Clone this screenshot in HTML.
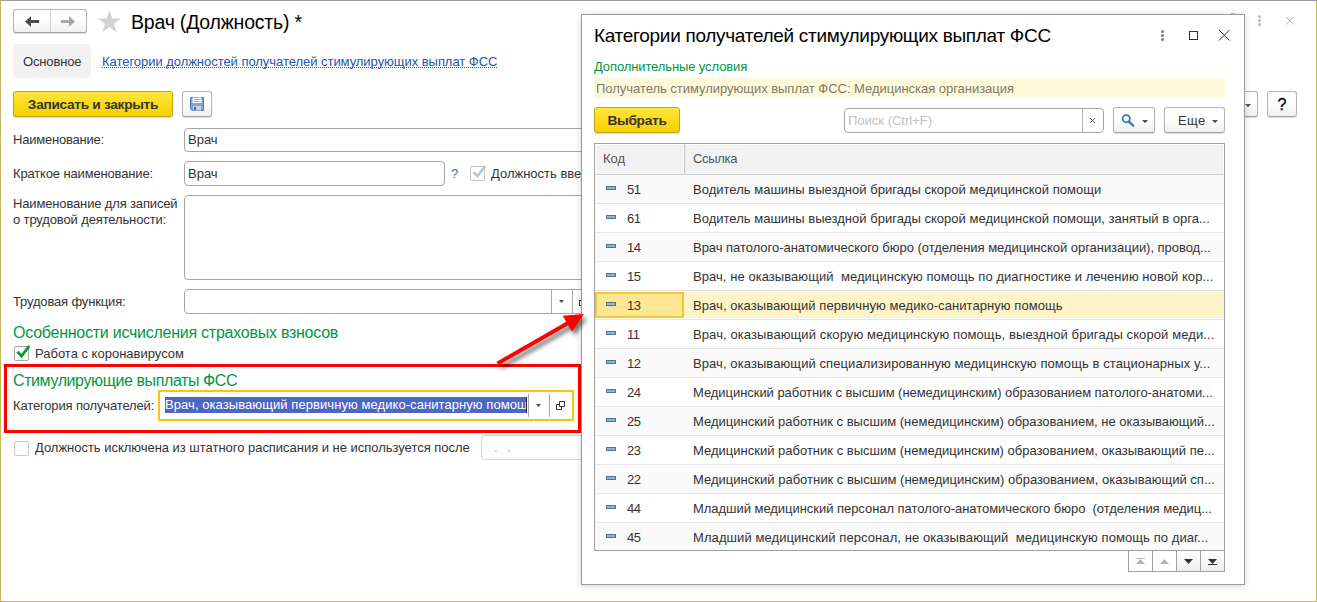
<!DOCTYPE html>
<html lang="ru">
<head>
<meta charset="utf-8">
<title>Врач (Должность)</title>
<style>
*{box-sizing:border-box;margin:0;padding:0}
html,body{width:1317px;height:602px;overflow:hidden;background:#fff}
body{font-family:"Liberation Sans",sans-serif;font-size:13px;color:#333;position:relative}
.abs{position:absolute}
#frame{position:absolute;left:0;top:0;width:1317px;height:602px;border-left:1px solid #c6b65e;border-right:1px solid #c6b65e;border-bottom:1px solid #c6b65e;border-top:1px solid #9c9c9c;pointer-events:none;z-index:50}
.t{position:absolute;white-space:nowrap;line-height:16px;height:16px}
.btn{position:absolute;border:1px solid #b5b5b5;border-bottom-color:#a2a2a2;border-radius:3px;background:linear-gradient(#fff 40%,#efefef);box-shadow:0 1px 1px rgba(0,0,0,.16)}
.ybtn{position:absolute;border:1px solid #c5a30b;border-radius:3px;background:linear-gradient(#ffe63a,#f5d000);box-shadow:0 1px 1px rgba(0,0,0,.16);font-weight:bold;color:#353535;text-align:center;font-size:13.7px;letter-spacing:-0.3px}
.inp{position:absolute;border:1px solid #a6a6a6;border-radius:4px;background:#fff}
.green{color:#009646}
.chk{position:absolute;width:15px;height:15px;border:1px solid #a6a6a6;border-radius:2px;background:#fff}
</style>
</head>
<body>
<!-- ===== main form ===== -->
<div id="main">
  <!-- nav buttons -->
  <div class="btn" style="left:13px;top:9px;width:74px;height:24px"></div>
  <div class="abs" style="left:50px;top:10px;width:1px;height:22px;background:#cfcfcf"></div>
  <svg class="abs" style="left:24px;top:16px" width="16" height="11" viewBox="0 0 16 11"><path d="M1 5.5 L7 0 V4 H15 V7 H7 V11 Z" fill="#4a4a4a"/></svg>
  <svg class="abs" style="left:60px;top:16px" width="16" height="11" viewBox="0 0 16 11"><path d="M15 5.5 L9 0 V4 H1 V7 H9 V11 Z" fill="#a9a9a9"/></svg>
  <!-- star -->
  <svg class="abs" style="left:96px;top:8px" width="28" height="26" viewBox="96 8 28 26"><path d="M109.45 9.95 L112.21 18.45 L121.15 18.45 L113.92 23.70 L116.68 32.20 L109.45 26.95 L102.22 32.20 L104.98 23.70 L97.75 18.45 L106.69 18.45 Z" fill="#d0d3d5"/></svg>
  <div class="t" style="left:131px;top:9.5px;font-size:19.5px;letter-spacing:-0.2px;line-height:24px;height:24px;color:#000">Врач (Должность) *</div>

  <!-- tabs -->
  <div class="abs" style="left:13px;top:44px;width:78px;height:34px;background:#f2f2f2;border-radius:4px"></div>
  <div class="t" style="letter-spacing:-0.16px;left:23px;top:54px">Основное</div>
  <div class="t" style="letter-spacing:-0.04px;left:102px;top:54px;color:#2552b4;border-bottom:1px dotted #2552b4;height:14px">Категории должностей получателей стимулирующих выплат ФСС</div>

  <!-- command bar -->
  <div class="ybtn" style="left:13px;top:91px;width:160px;height:26px;line-height:25px">Записать и закрыть</div>
  <div class="btn" style="left:182px;top:91px;width:30px;height:26px"></div>
  <svg class="abs" style="left:190px;top:97px" width="14" height="14" viewBox="0 0 14 14"><path d="M0.5 0.5 H13.5 V13.5 H2 L0.5 12 Z" fill="#7ba3d8" stroke="#4a7ab5"/><rect x="2.5" y="0.5" width="9" height="5.5" fill="#fff"/><rect x="3.5" y="2" width="7" height="1" fill="#8fb0dc"/><rect x="3.5" y="4" width="7" height="1" fill="#8fb0dc"/><rect x="3" y="9" width="8" height="4.5" fill="#c9d3d3"/><rect x="4" y="10" width="2" height="3" fill="#3d6cb5"/></svg>

  <!-- right buttons behind popup -->
  <div class="btn" style="left:1200px;top:91px;width:58px;height:26px"></div>
  <div class="btn" style="left:1267px;top:91px;width:30px;height:26px"></div>
  <div class="t" style="left:1267px;top:96px;width:30px;text-align:center;font-size:16px;color:#000;-webkit-text-stroke:0.3px #000;line-height:18px;height:18px">?</div>
  <svg class="abs" style="left:1245px;top:104px" width="6" height="3" viewBox="0 0 6 3"><path d="M0 0 H6 L3 3.2 Z" fill="#505050"/></svg>
  <!-- window controls behind -->
  <div class="abs" style="left:1258px;top:15px;width:3px;height:3px;border-radius:1.5px;background:#b8b8b8;box-shadow:0 4px 0 #b8b8b8,0 8px 0 #b8b8b8"></div>
  <svg class="abs" style="left:1285px;top:16px" width="9" height="9" viewBox="0 0 9 9"><path d="M1 1 L8.5 8.5 M8.5 1 L1 8.5" stroke="#b0b0b0" stroke-width="1"/></svg>

  <!-- fields -->
  <div class="t" style="letter-spacing:-0.22px;left:13px;top:132px">Наименование:</div>
  <div class="inp" style="left:184px;top:128px;width:500px;height:24px"></div>
  <div class="t" style="left:188px;top:132px;color:#333">Врач</div>

  <div class="t" style="letter-spacing:-0.15px;left:13px;top:166px">Краткое наименование:</div>
  <div class="inp" style="left:184px;top:161px;width:261px;height:25px"></div>
  <div class="t" style="left:188px;top:166px;color:#333">Врач</div>
  <div class="t" style="left:451px;top:166px;color:#1e6fb5">?</div>
  <div class="chk" style="left:470px;top:166px;border-color:#c4c4c4"></div>
  <svg class="abs" style="left:470px;top:163px;overflow:visible" width="18" height="18" viewBox="470 163 18 18"><path d="M473.6 172 L477.4 176.2 L485.3 165.8" fill="none" stroke="#c2c2c2" stroke-width="2.6"/></svg>
  <div class="t" style="left:491px;top:166px">Должность введена</div>

  <div class="t" style="letter-spacing:-0.15px;left:13px;top:196px">Наименование для записей</div>
  <div class="t" style="letter-spacing:-0.13px;left:13px;top:212px">о трудовой деятельности:</div>
  <div class="inp" style="left:184px;top:195px;width:500px;height:85px"></div>

  <div class="t" style="letter-spacing:-0.15px;left:13px;top:294px">Трудовая функция:</div>
  <div class="inp" style="left:184px;top:289px;width:420px;height:25px"></div>
  <div class="abs" style="left:551px;top:290px;width:1px;height:23px;background:#a8a8a8"></div>
  <div class="abs" style="left:572px;top:290px;width:1px;height:23px;background:#a8a8a8"></div>
  <div class="abs" style="left:579px;top:300px;width:3px;height:6px;border:1px solid #333;border-right:0"></div>
  <svg class="abs" style="left:559px;top:300px" width="5" height="3" viewBox="0 0 5 3"><path d="M0 0 H5 L2.5 3 Z" fill="#4a4a4a"/></svg>

  <div class="t green" style="left:13px;top:323px;font-size:16px;letter-spacing:-0.25px;line-height:20px;height:20px">Особенности исчисления страховых взносов</div>
  <div class="chk" style="left:14px;top:346px"></div>
  <svg class="abs" style="left:14px;top:343px;overflow:visible" width="18" height="18" viewBox="14 343 18 18"><path d="M17.4 351.6 L21.5 356 L29.3 345.8" fill="none" stroke="#0a9a3a" stroke-width="2.8"/></svg>
  <div class="t" style="left:35px;top:346px">Работа с коронавирусом</div>

  <div class="t green" style="left:13px;top:371px;font-size:16px;letter-spacing:-0.4px;line-height:20px;height:20px">Стимулирующие выплаты ФСС</div>
  <div class="t" style="letter-spacing:-0.15px;left:13px;top:398px">Категория получателей:</div>
  <div class="abs" style="left:158px;top:390px;width:416px;height:31px;border:2px solid #fbc414;background:#fff"></div>
  <div class="t" style="left:165px;top:397px;height:16px;line-height:16px;background:#4e66c3;color:#fff;width:361px;overflow:hidden;letter-spacing:0.071px">Врач, оказывающий первичную медико-санитарную помощь</div>
  <div class="abs" style="left:526px;top:397px;width:1px;height:16px;background:#222"></div>
  <div class="abs" style="left:528px;top:394px;width:1px;height:23px;background:#a8a8a8"></div>
  <div class="abs" style="left:549px;top:394px;width:1px;height:23px;background:#a8a8a8"></div>
  <svg class="abs" style="left:536px;top:404px" width="5" height="3" viewBox="0 0 5 3"><path d="M0 0 H5 L2.5 3 Z" fill="#4a4a4a"/></svg>
  <svg class="abs" style="left:556px;top:401px" width="10" height="10" viewBox="0 0 10 10"><path d="M3.5 0.5 H8.5 V5.5 H3.5 Z M3.5 3.5 H0.5 V8.5 H5.5 V5.5" fill="none" stroke="#333" stroke-width="1"/></svg>

  <div class="chk" style="left:14px;top:441px;border-color:#c9c9c9"></div>
  <div class="t" style="letter-spacing:-0.025px;left:35px;top:440px">Должность исключена из штатного расписания и не используется после</div>
  <div class="inp" style="left:481px;top:435px;width:120px;height:25px;border-color:#d5d5d5"></div>
  <div class="t" style="left:494px;top:440px;color:#999;letter-spacing:0.7px">.&nbsp;&nbsp;.</div>

  <!-- red highlight -->
  <div class="abs" style="left:4px;top:364px;width:577px;height:69px;border:3px solid #fe0000"></div>
</div>

<!-- ===== popup ===== -->
<div id="pop" class="abs" style="left:581px;top:14px;width:664px;height:571px;background:#fff;border:1px solid #9a9a9a;box-shadow:0 1px 7px rgba(0,0,0,.17)"></div>
<div id="popc">
  <div class="t" style="left:594px;top:25px;font-size:19px;letter-spacing:-0.3px;line-height:22px;height:22px;color:#000">Категории получателей стимулирующих выплат ФСС</div>
  <!-- window controls -->
  <div class="abs" style="left:1161px;top:30px;width:3px;height:3px;border-radius:1.5px;background:#7c7c7c;box-shadow:0 4px 0 #7c7c7c,0 8px 0 #7c7c7c"></div>
  <div class="abs" style="left:1189px;top:31px;width:9px;height:9px;border:1px solid #2e2e2e"></div>
  <svg class="abs" style="left:1218px;top:29px" width="12" height="12" viewBox="0 0 12 12"><path d="M1 1 L11.5 11.5 M11.5 1 L1 11.5" stroke="#333" stroke-width="1"/></svg>
  <div class="abs" style="left:1231px;top:13px;width:4px;height:1px;background:#b5b5b5"></div>

  <div class="t green" style="letter-spacing:-0.11px;left:594px;top:59px">Дополнительные условия</div>
  <div class="abs" style="left:594px;top:78px;width:631px;height:20px;background:#fff9dc"></div>
  <div class="t" style="left:596px;top:81px;color:#80796a;letter-spacing:-0.03px">Получатель стимулирующих выплат ФСС: Медицинская организация</div>

  <div class="ybtn" style="left:594px;top:107px;width:86px;height:26px;line-height:25px">Выбрать</div>
  <div class="inp" style="left:844px;top:108px;width:260px;height:25px"></div>
  <div class="abs" style="left:1082px;top:109px;width:1px;height:23px;background:#b8b8b8"></div>
  <div class="t" style="left:848px;top:113px;color:#c2c2c2">Поиск (Ctrl+F)</div>
  <svg class="abs" style="left:1089px;top:117px" width="7" height="7" viewBox="0 0 7 7"><path d="M1 1 L6 6 M6 1 L1 6" stroke="#555" stroke-width="1"/></svg>
  <div class="btn" style="left:1113px;top:107px;width:42px;height:26px"></div>
  <svg class="abs" style="left:1121px;top:113px" width="14" height="14" viewBox="0 0 14 14"><circle cx="5.3" cy="5.7" r="3.6" fill="none" stroke="#2b78b8" stroke-width="1.7"/><path d="M8 8.6 L12.3 12.8" stroke="#2b78b8" stroke-width="2.2" stroke-linecap="round"/></svg>
  <svg class="abs" style="left:1142px;top:120px" width="6" height="3" viewBox="0 0 6 3"><path d="M0 0 H6 L3 3.2 Z" fill="#505050"/></svg>
  <div class="btn" style="left:1164px;top:107px;width:61px;height:26px"></div>
  <div class="t" style="letter-spacing:0.4px;left:1178px;top:113px">Еще</div>
  <svg class="abs" style="left:1212px;top:120px" width="6" height="3" viewBox="0 0 6 3"><path d="M0 0 H6 L3 3.2 Z" fill="#505050"/></svg>

  <!-- table -->
  <div class="abs" style="left:594px;top:143px;width:631px;height:408px;border:1px solid #a0a0a0;background:#fff"></div>
  <div class="abs" style="left:595px;top:144px;width:629px;height:31px;background:#f2f2f2;border:1px solid #fff;border-bottom:1px solid #cfcfcf"></div>
  <div class="abs" style="left:684px;top:144px;width:1px;height:30px;background:#c2c2c2"></div>
  <div class="abs" style="left:683px;top:144px;width:1px;height:30px;background:#fff"></div>
  <div class="t" style="left:603px;top:151px;color:#555">Код</div>
  <div class="t" style="letter-spacing:-0.33px;left:693px;top:151px;color:#555">Ссылка</div>

  <div class="abs" style="left:595px;top:175px;width:629px;height:29px;background:#fafafa;border-bottom:1px solid #e6e6e6"></div>
  <div class="abs" style="left:606px;top:186px;width:10px;height:4px;background:#8ab4da;border:1px solid #4f7595"></div>
  <div class="t" style="left:627px;top:181.5px;color:#333;letter-spacing:-0.4px">51</div>
  <div class="t" style="left:693px;top:181.5px;color:#333;letter-spacing:0.016px">Водитель машины выездной бригады скорой медицинской помощи</div>
  <div class="abs" style="left:595px;top:204px;width:629px;height:29px;background:#fff;border-bottom:1px solid #e6e6e6"></div>
  <div class="abs" style="left:606px;top:215px;width:10px;height:4px;background:#8ab4da;border:1px solid #4f7595"></div>
  <div class="t" style="left:627px;top:210.5px;color:#333;letter-spacing:-0.4px">61</div>
  <div class="t" style="left:693px;top:210.5px;color:#333;letter-spacing:0.016px">Водитель машины выездной бригады скорой медицинской помощи, занятый в орга...</div>
  <div class="abs" style="left:595px;top:233px;width:629px;height:29px;background:#fafafa;border-bottom:1px solid #e6e6e6"></div>
  <div class="abs" style="left:606px;top:244px;width:10px;height:4px;background:#8ab4da;border:1px solid #4f7595"></div>
  <div class="t" style="left:627px;top:239.5px;color:#333;letter-spacing:-0.4px">14</div>
  <div class="t" style="left:693px;top:239.5px;color:#333;letter-spacing:-0.036px">Врач патолого-анатомического бюро (отделения медицинской организации), провод...</div>
  <div class="abs" style="left:595px;top:262px;width:629px;height:29px;background:#fff;border-bottom:1px solid #e6e6e6"></div>
  <div class="abs" style="left:606px;top:273px;width:10px;height:4px;background:#8ab4da;border:1px solid #4f7595"></div>
  <div class="t" style="left:627px;top:268.5px;color:#333;letter-spacing:-0.4px">15</div>
  <div class="t" style="left:693px;top:268.5px;color:#333;letter-spacing:0.058px">Врач, не оказывающий&nbsp; медицинскую помощь по диагностике и лечению новой кор...</div>
  <div class="abs" style="left:595px;top:291px;width:629px;height:28px;background:#fff;border-bottom:0"></div><div class="abs" style="left:595px;top:319px;width:629px;height:1px;background:#e6e6e6"></div><div class="abs" style="left:684px;top:292px;width:540px;height:26px;background:#fff3c9"></div>
  <div class="abs" style="left:595px;top:292px;width:89px;height:26px;background:#fee794;border:2px solid #f7c52e"></div>
  <div class="abs" style="left:606px;top:302px;width:10px;height:4px;background:#8ab4da;border:1px solid #4f7595"></div>
  <div class="t" style="left:627px;top:297.5px;color:#333;letter-spacing:-0.4px">13</div>
  <div class="t" style="left:693px;top:297.5px;color:#333;letter-spacing:0.071px">Врач, оказывающий первичную медико-санитарную помощь</div>
  <div class="abs" style="left:595px;top:320px;width:629px;height:29px;background:#fff;border-bottom:1px solid #e6e6e6"></div>
  <div class="abs" style="left:606px;top:331px;width:10px;height:4px;background:#8ab4da;border:1px solid #4f7595"></div>
  <div class="t" style="left:627px;top:326.5px;color:#333;letter-spacing:-0.4px">11</div>
  <div class="t" style="left:693px;top:326.5px;color:#333;letter-spacing:0.1px">Врач, оказывающий скорую медицинскую помощь, выездной бригады скорой меди...</div>
  <div class="abs" style="left:595px;top:349px;width:629px;height:29px;background:#fafafa;border-bottom:1px solid #e6e6e6"></div>
  <div class="abs" style="left:606px;top:360px;width:10px;height:4px;background:#8ab4da;border:1px solid #4f7595"></div>
  <div class="t" style="left:627px;top:355.5px;color:#333;letter-spacing:-0.4px">12</div>
  <div class="t" style="left:693px;top:355.5px;color:#333;letter-spacing:0.084px">Врач, оказывающий специализированную медицинскую помощь в стационарных у...</div>
  <div class="abs" style="left:595px;top:378px;width:629px;height:29px;background:#fff;border-bottom:1px solid #e6e6e6"></div>
  <div class="abs" style="left:606px;top:389px;width:10px;height:4px;background:#8ab4da;border:1px solid #4f7595"></div>
  <div class="t" style="left:627px;top:384.5px;color:#333;letter-spacing:-0.4px">24</div>
  <div class="t" style="left:693px;top:384.5px;color:#333;letter-spacing:-0.05px">Медицинский работник с высшим (немедицинским) образованием патолого-анатоми...</div>
  <div class="abs" style="left:595px;top:407px;width:629px;height:29px;background:#fafafa;border-bottom:1px solid #e6e6e6"></div>
  <div class="abs" style="left:606px;top:418px;width:10px;height:4px;background:#8ab4da;border:1px solid #4f7595"></div>
  <div class="t" style="left:627px;top:413.5px;color:#333;letter-spacing:-0.4px">25</div>
  <div class="t" style="left:693px;top:413.5px;color:#333;letter-spacing:0.003px">Медицинский работник с высшим (немедицинским) образованием, не оказывающий...</div>
  <div class="abs" style="left:595px;top:436px;width:629px;height:29px;background:#fff;border-bottom:1px solid #e6e6e6"></div>
  <div class="abs" style="left:606px;top:447px;width:10px;height:4px;background:#8ab4da;border:1px solid #4f7595"></div>
  <div class="t" style="left:627px;top:442.5px;color:#333;letter-spacing:-0.4px">23</div>
  <div class="t" style="left:693px;top:442.5px;color:#333;letter-spacing:0.005px">Медицинский работник с высшим (немедицинским) образованием, оказывающий пе...</div>
  <div class="abs" style="left:595px;top:465px;width:629px;height:29px;background:#fafafa;border-bottom:1px solid #e6e6e6"></div>
  <div class="abs" style="left:606px;top:476px;width:10px;height:4px;background:#8ab4da;border:1px solid #4f7595"></div>
  <div class="t" style="left:627px;top:471.5px;color:#333;letter-spacing:-0.4px">22</div>
  <div class="t" style="left:693px;top:471.5px;color:#333;letter-spacing:0.014px">Медицинский работник с высшим (немедицинским) образованием, оказывающий сп...</div>
  <div class="abs" style="left:595px;top:494px;width:629px;height:29px;background:#fff;border-bottom:1px solid #e6e6e6"></div>
  <div class="abs" style="left:606px;top:505px;width:10px;height:4px;background:#8ab4da;border:1px solid #4f7595"></div>
  <div class="t" style="left:627px;top:500.5px;color:#333;letter-spacing:-0.4px">44</div>
  <div class="t" style="left:693px;top:500.5px;color:#333;letter-spacing:-0.038px">Младший медицинский персонал патолого-анатомического бюро&nbsp; (отделения медиц...</div>
  <div class="abs" style="left:595px;top:523px;width:629px;height:27px;background:#fafafa"></div>
  <div class="abs" style="left:606px;top:534px;width:10px;height:4px;background:#8ab4da;border:1px solid #4f7595"></div>
  <div class="t" style="left:627px;top:529.5px;color:#333;letter-spacing:-0.4px">45</div>
  <div class="t" style="left:693px;top:529.5px;color:#333;letter-spacing:0.08px">Младший медицинский персонал, не оказывающий&nbsp; медицинскую помощь по диаг...</div>
  <!-- scroll buttons -->
  <div class="abs" style="left:1128px;top:550px;width:97px;height:22px;border:1px solid #a0a0a0;background:linear-gradient(90deg,#fff 0,#fff 48px,transparent 48px),linear-gradient(#fff,#efefef)"></div>
  <div class="abs" style="left:1152px;top:551px;width:1px;height:20px;background:#a0a0a0"></div>
  <div class="abs" style="left:1176px;top:551px;width:1px;height:20px;background:#a0a0a0"></div>
  <div class="abs" style="left:1200px;top:551px;width:1px;height:20px;background:#a0a0a0"></div>
  <svg class="abs" style="left:1136px;top:558px" width="9" height="6" viewBox="0 0 9 6"><path d="M0 0 H9 V1 H0 Z M4.5 1 L9 6 H0 Z" fill="#b4b4b4"/></svg>
  <svg class="abs" style="left:1160px;top:559px" width="9" height="5" viewBox="0 0 9 5"><path d="M4.5 0 L9 5 H0 Z" fill="#b4b4b4"/></svg>
  <svg class="abs" style="left:1184px;top:559px" width="9" height="5" viewBox="0 0 9 5"><path d="M0 0 H9 L4.5 5 Z" fill="#333"/></svg>
  <svg class="abs" style="left:1208px;top:559px" width="9" height="7" viewBox="0 0 9 7"><path d="M0 0 H9 L4.5 5 Z M0 5 H9 V6 H0 Z" fill="#333"/></svg>
</div>

<!-- red arrow -->
<svg class="abs" style="left:480px;top:300px;overflow:visible;filter:drop-shadow(3px 4px 2.2px rgba(0,0,0,.55))" width="120" height="80" viewBox="480 300 120 80"><path d="M497.5 363.5 L569 322.5" stroke="#fe0000" stroke-width="4" fill="none"/><path d="M584 314 L562.7 315.7 L572 331.6 Z" fill="#fe0000"/></svg>
<div id="frame"></div>
</body>
</html>
